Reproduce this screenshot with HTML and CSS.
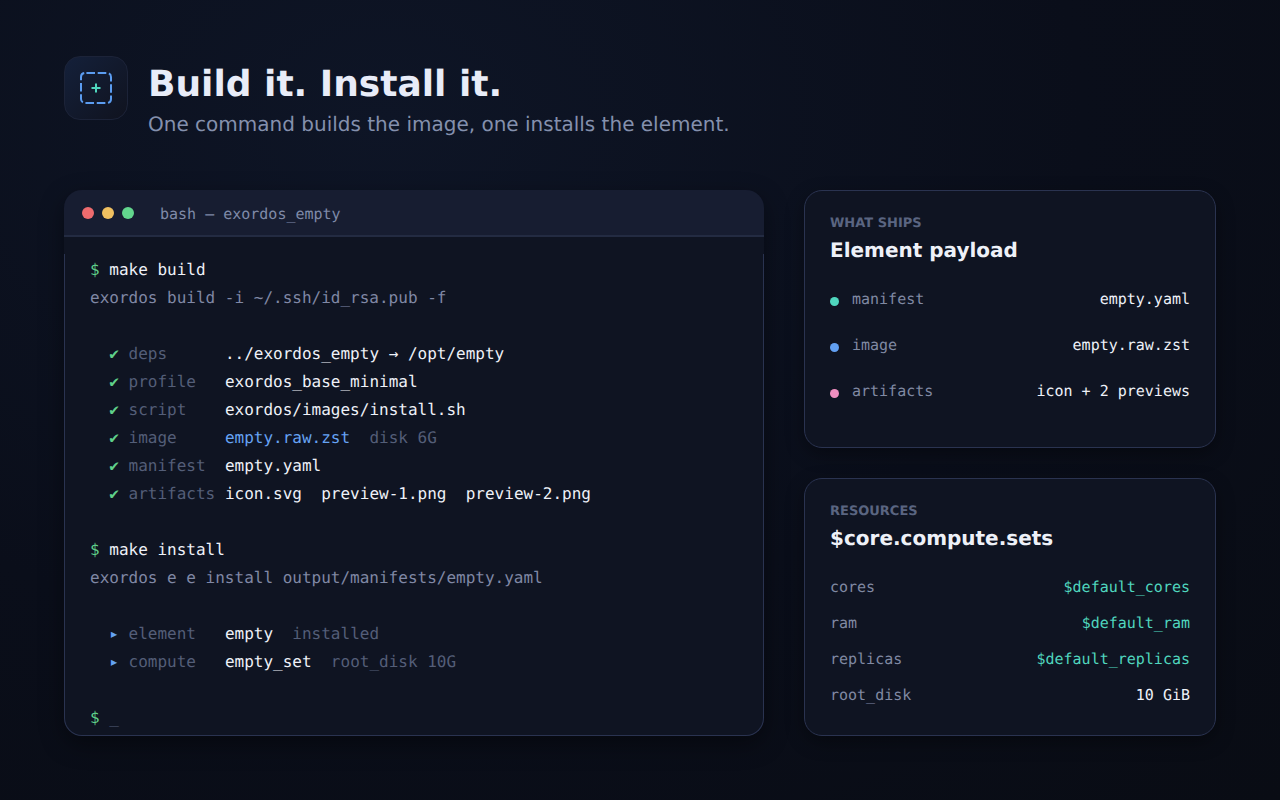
FILE: index.html
```html
<!DOCTYPE html>
<html lang="en">

<head>
    <meta charset="UTF-8">
    <title>Build it. Install it.</title>
    <link rel="stylesheet" href="styles.css">
</head>

<body>
    <div class="slide">
        <header class="head">
            <div class="logo">
                <svg width="34" height="34" viewBox="0 0 34 34" fill="none">
                    <rect x="2" y="2" width="30" height="30" rx="4" stroke="#5b9cf0" stroke-width="2" stroke-dasharray="8.6 2.7" stroke-dashoffset="-1.4"/>
                    <path d="M17 12.5v9M12.5 17h9" stroke="#4fd6be" stroke-width="2"/>
                </svg>
            </div>
            <div class="head-text">
                <h1>Build it. Install it.</h1>
                <p class="sub">One command builds the image, one installs the element.</p>
            </div>
        </header>

        <main class="columns">
            <section class="term">
                <div class="term-bar">
                    <span class="dot red"></span>
                    <span class="dot yellow"></span>
                    <span class="dot green"></span>
                    <span class="term-title">bash — exordos_empty</span>
                </div>
<pre class="term-body"><span class="ok">$</span> <span class="w">make build</span>
<span class="cmd">exordos build -i ~/.ssh/id_rsa.pub -f</span>

  <span class="ok">✔</span> <span class="k">deps     </span> <span class="w">../exordos_empty → /opt/empty</span>
  <span class="ok">✔</span> <span class="k">profile  </span> <span class="w">exordos_base_minimal</span>
  <span class="ok">✔</span> <span class="k">script   </span> <span class="w">exordos/images/install.sh</span>
  <span class="ok">✔</span> <span class="k">image    </span> <span class="blue">empty.raw.zst</span>  <span class="k">disk 6G</span>
  <span class="ok">✔</span> <span class="k">manifest </span> <span class="w">empty.yaml</span>
  <span class="ok">✔</span> <span class="k">artifacts</span> <span class="w">icon.svg  preview-1.png  preview-2.png</span>

<span class="ok">$</span> <span class="w">make install</span>
<span class="cmd">exordos e e install output/manifests/empty.yaml</span>

  <span class="blue">▸</span> <span class="k">element  </span> <span class="w">empty</span>  <span class="k">installed</span>
  <span class="blue">▸</span> <span class="k">compute  </span> <span class="w">empty_set</span>  <span class="k">root_disk 10G</span>

<span class="ok">$</span> <span class="k">_</span></pre>
            </section>

            <aside class="side">
                <section class="card">
                    <div class="eyebrow">WHAT SHIPS</div>
                    <h2>Element payload</h2>
                    <ul class="payload">
                        <li><i class="bullet teal"></i><span class="name">manifest</span><span class="val">empty.yaml</span></li>
                        <li><i class="bullet blue-bg"></i><span class="name">image</span><span class="val">empty.raw.zst</span></li>
                        <li><i class="bullet pink"></i><span class="name">artifacts</span><span class="val">icon + 2 previews</span></li>
                    </ul>
                </section>
                <section class="card">
                    <div class="eyebrow">RESOURCES</div>
                    <h2>$core.compute.sets</h2>
                    <ul class="res">
                        <li><span class="name">cores</span><span class="var">$default_cores</span></li>
                        <li><span class="name">ram</span><span class="var">$default_ram</span></li>
                        <li><span class="name">replicas</span><span class="var">$default_replicas</span></li>
                        <li><span class="name">root_disk</span><span class="val">10 GiB</span></li>
                    </ul>
                </section>
            </aside>
        </main>
    </div>
</body>

</html>
```

FILE: styles.css
```css
* {
    box-sizing: border-box;
}

html,
body {
    margin: 0;
    height: 100%;
}

body {
    background: radial-gradient(ellipse at 30% 15%, #0e1526 0%, #0a0e1a 55%, #090c14 100%);
    font-family: "DejaVu Sans", sans-serif;
    text-rendering: geometricPrecision;
    overflow: hidden;
}

h1,
h2,
p,
ul,
pre {
    margin: 0;
    padding: 0;
}

.slide {
    width: 1280px;
    height: 800px;
    padding: 56px 64px 0;
}

.head {
    display: flex;
    gap: 20px;
    height: 134px;
}

.head-text {
    padding-top: 4px;
}

.logo {
    width: 64px;
    height: 64px;
    border: 1px solid #1c2338;
    border-radius: 16px;
    background: linear-gradient(135deg, #14203a, #10131f);
    display: flex;
    align-items: center;
    justify-content: center;
}

h1 {
    font-size: 36px;
    line-height: 50px;
    font-weight: 700;
    color: #e8ecf8;
}

.sub {
    font-size: 20px;
    line-height: 28px;
    color: #8490ad;
}

.columns {
    display: flex;
    gap: 40px;
    height: 546px;
}

.term {
    width: 700px;
    display: flex;
    flex-direction: column;
    border-radius: 18px;
    box-shadow: 0 8px 24px rgb(0 0 0 / 40%);
}

.term-bar {
    height: 47px;
    flex: none;
    padding-left: 18px;
    display: flex;
    align-items: center;
    gap: 8px;
    background: #171d31;
    border-bottom: 2px solid #232b42;
    border-radius: 18px 18px 0 0;
}

.dot {
    width: 12px;
    height: 12px;
    border-radius: 50%;
}

.red {
    background: #ee6b6e;
}

.yellow {
    background: #f0c060;
}

.green {
    background: #62d68d;
}

.term-title {
    margin-left: 18px;
    margin-top: 2px;
    font-family: "DejaVu Sans Mono", monospace;
    font-size: 15px;
    color: #7f8aa8;
}

.term-body {
    flex: 1;
    position: relative;
    padding: 19px 25px 0;
    background: #0f1422;
    border: 1px solid #2a3350;
    border-top: 0;
    border-radius: 0 0 18px 18px;
    font-family: "DejaVu Sans Mono", monospace;
    font-size: 16px;
    line-height: 28px;
    color: #e8ecf8;
}

/* the side borders only start a bit below the title bar */
.term-body::before {
    content: "";
    position: absolute;
    top: 0;
    left: -1px;
    right: -1px;
    height: 17px;
    background: #0f1422;
}

.ok {
    color: #5fd08a;
}

.w {
    color: #eef1f8;
}

.cmd {
    color: #8088a5;
}

.k {
    color: #545e78;
}

.blue {
    color: #66a3f4;
}

.side {
    width: 412px;
    display: flex;
    flex-direction: column;
    gap: 30px;
}

.card {
    height: 258px;
    padding: 24px 25px 0;
    background: #0f1422;
    border: 1px solid #2a3350;
    border-radius: 18px;
    box-shadow: 0 6px 18px rgb(0 0 0 / 35%);
}

.eyebrow {
    font-size: 13px;
    line-height: 18px;
    font-weight: 700;
    color: #5a6581;
}

h2 {
    margin-top: 2px;
    font-size: 20px;
    line-height: 30px;
    font-weight: 700;
    color: #eef1f8;
}

.payload,
.res {
    list-style: none;
    font-family: "DejaVu Sans Mono", monospace;
    font-size: 15px;
}

.payload {
    margin-top: 11px;
}

.payload li {
    height: 46px;
    display: flex;
    align-items: center;
}

.res {
    margin-top: 16px;
}

.res li {
    height: 36px;
    display: flex;
    align-items: center;
    justify-content: space-between;
}

.bullet {
    width: 9px;
    height: 9px;
    margin-right: 13px;
    margin-top: 4px;
    border-radius: 50%;
}

.teal {
    background: #4fd6be;
}

.blue-bg {
    background: #62a0f2;
}

.pink {
    background: #ef8fc0;
}

.name {
    color: #8089a2;
}

.val {
    margin-left: auto;
    color: #eef1f8;
}

.var {
    color: #4fd6be;
}
```
